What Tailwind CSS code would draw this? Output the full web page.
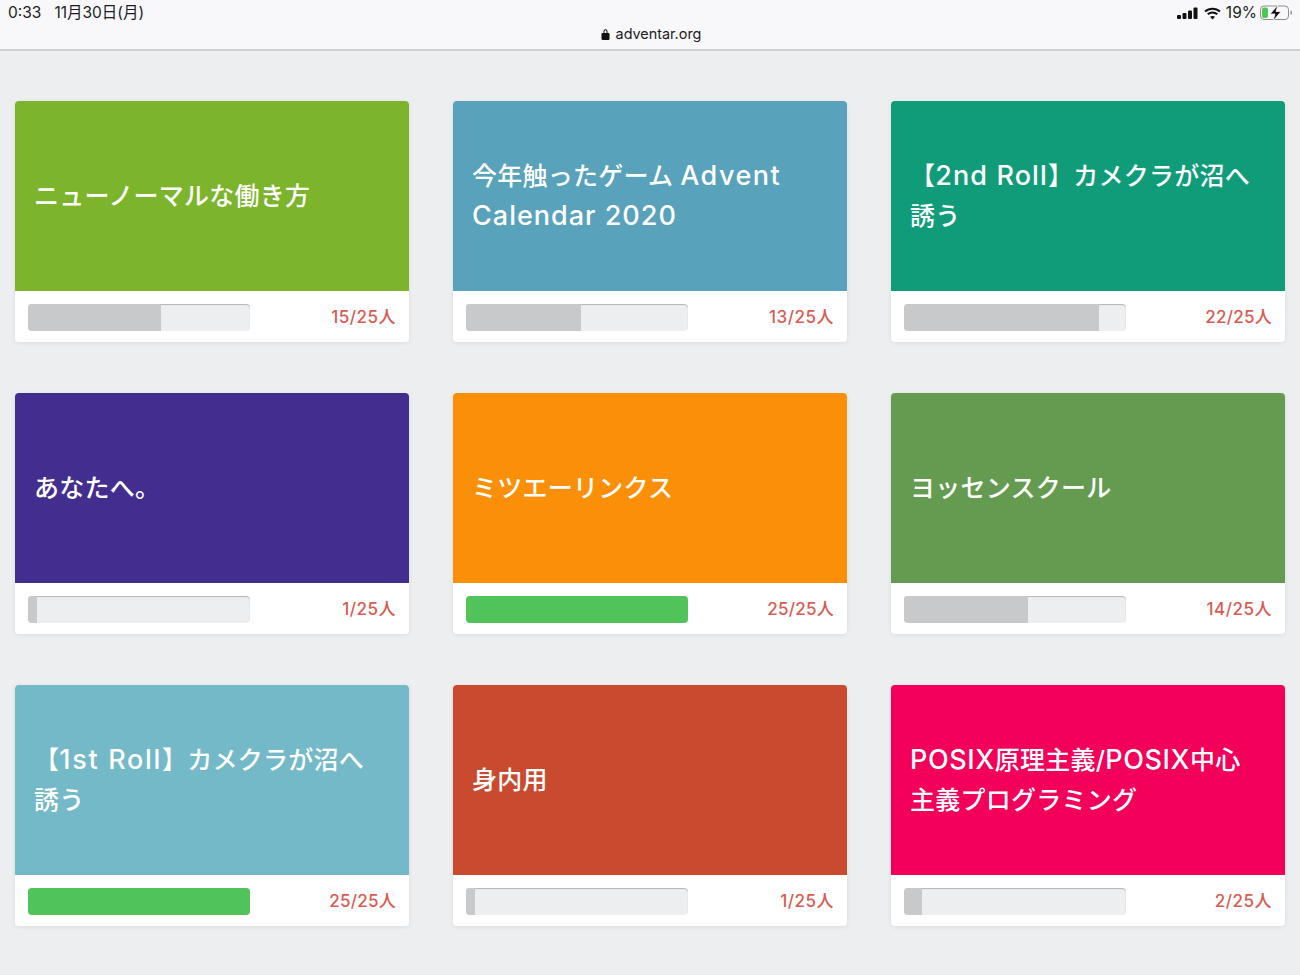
<!DOCTYPE html>
<html lang="ja">
<head>
  <meta charset="UTF-8" />
  <meta name="viewport" content="width=device-width, initial-scale=1.0" />
  <title>adventar.org</title>
  <script src="https://cdn.jsdelivr.net/npm/@tailwindcss/browser@4"></script>
</head>
<body class="bg-[#edeef0] font-['Inter','Noto_Sans_CJK_JP',sans-serif] h-[975px] overflow-hidden">
  <!-- Status bar + address -->
  <header class="relative h-[51px] bg-[#f8f8fa] border-b-2 border-[#cfcfd1] text-[#1c1c1e]">
    <div class="flex justify-between items-center h-[26px] pl-2 pr-[7px]">
      <div class="flex gap-[13px] text-[15.500px] leading-[26px]">
        <span>0:33</span>
        <span>11月30日(月)</span>
      </div>
      <div class="flex items-center text-[15.500px]">
        <svg width="21" height="13" viewBox="0 0 21 13" fill="#111"><rect x="0" y="8" width="4" height="4" rx="1"/><rect x="5.500" y="6" width="4" height="6" rx="1"/><rect x="11" y="3.500" width="4" height="8.500" rx="1"/><rect x="16.500" y="0.500" width="4" height="11.500" rx="1"/></svg>
        <svg class="ml-[6px]" width="17" height="13" viewBox="0 0 17 13" fill="none" stroke="#111" stroke-width="2"><path d="M1 4.600C5.200.8 11.800.8 16 4.600"/><path d="M3.700 7.300c2.700-2.400 6.900-2.400 9.600 0"/><path d="M8.500 12.500 6 9.800c1.400-1.200 3.600-1.200 5 0z" fill="#111" stroke="none"/></svg>
        <span class="ml-[5px]">19%</span>
        <svg class="ml-[3px]" width="33" height="16" viewBox="0 0 33 16" fill="none"><rect x=".5" y="1" width="28" height="13.500" rx="3.500" stroke="#8e8e90"/><rect x="2" y="2.500" width="6" height="10.500" rx="2" fill="#4cc654"/><path d="M30.500 5.500c1 .4 1.500 1.200 1.500 2.200s-.5 1.900-1.500 2.300z" fill="#8e8e90"/><path d="M18 0 10 9h5l-2 7 8-9.500h-5z" fill="#111" stroke="#f8f8fa" stroke-width=".8"/></svg>
      </div>
    </div>
    <div class="absolute left-0 right-0 top-[24px] flex justify-center items-center gap-[6px] pl-[2px] text-[14.400px] leading-[20px]">
      <svg width="9" height="12" viewBox="0 0 9 12" fill="#111"><path d="M2.500 5V3.300a2 2 0 0 1 4 0V5h-1V3.300a1 1 0 0 0-2 0V5z"/><rect x="0.500" y="5" width="8" height="7" rx="1.200"/></svg>
      <span>adventar.org</span>
    </div>
  </header>

  <!-- Calendars -->
  <main class="grid grid-cols-3 gap-x-[44px] gap-y-[51px] pt-[50px] px-[15px]">
    <article class="h-[241px] bg-white rounded-[4px] shadow-[0_1px_4px_rgba(0,0,0,0.08)] overflow-hidden">
      <div class="h-[190px] bg-[#7cb52b] flex items-center pl-[19px] pr-5 text-white text-[25px] font-medium leading-[40px] tracking-[0.25px]"><div>ニューノーマルな働き方</div></div>
      <div class="h-[51px] flex items-start justify-between pt-[13px] px-[13px]">
        <div class="w-[222px] h-[27px] bg-[#edeef0] rounded-[4px] overflow-hidden shadow-[inset_0_1px_1px_rgba(0,0,0,0.25)]"><div class="h-full bg-[#c8c9cb]" style="width:60%"></div></div>
        <span class="text-[17px] font-medium leading-[26px] text-[#d85c54] tracking-[0.5px]">15/25人</span>
      </div>
    </article>
    <article class="h-[241px] bg-white rounded-[4px] shadow-[0_1px_4px_rgba(0,0,0,0.08)] overflow-hidden">
      <div class="h-[190px] bg-[#58a2bc] flex items-center pl-[19px] pr-5 text-white text-[25px] font-medium leading-[40px] tracking-[0.25px]"><div>今年触ったゲーム <span class="text-[27px] leading-none tracking-[1.500px]">Advent</span> <span class="text-[27px] leading-none tracking-[1px]">Calendar 2020</span></div></div>
      <div class="h-[51px] flex items-start justify-between pt-[13px] px-[13px]">
        <div class="w-[222px] h-[27px] bg-[#edeef0] rounded-[4px] overflow-hidden shadow-[inset_0_1px_1px_rgba(0,0,0,0.25)]"><div class="h-full bg-[#c8c9cb]" style="width:52%"></div></div>
        <span class="text-[17px] font-medium leading-[26px] text-[#d85c54] tracking-[0.5px]">13/25人</span>
      </div>
    </article>
    <article class="h-[241px] bg-white rounded-[4px] shadow-[0_1px_4px_rgba(0,0,0,0.08)] overflow-hidden">
      <div class="h-[190px] bg-[#119c79] flex items-center pl-[19px] pr-5 text-white text-[25px] font-medium leading-[40px] tracking-[0.25px]"><div>【<span class="text-[27px] leading-none tracking-[1.100px]">2nd Roll</span>】カメクラが沼へ<br>誘う</div></div>
      <div class="h-[51px] flex items-start justify-between pt-[13px] px-[13px]">
        <div class="w-[222px] h-[27px] bg-[#edeef0] rounded-[4px] overflow-hidden shadow-[inset_0_1px_1px_rgba(0,0,0,0.25)]"><div class="h-full bg-[#c8c9cb]" style="width:88%"></div></div>
        <span class="text-[17px] font-medium leading-[26px] text-[#d85c54] tracking-[0.25px]">22/25人</span>
      </div>
    </article>
    <article class="h-[241px] bg-white rounded-[4px] shadow-[0_1px_4px_rgba(0,0,0,0.08)] overflow-hidden">
      <div class="h-[190px] bg-[#432e90] flex items-center pl-[19px] pr-5 text-white text-[25px] font-medium leading-[40px] tracking-[0.25px]"><div>あなたへ。</div></div>
      <div class="h-[51px] flex items-start justify-between pt-[13px] px-[13px]">
        <div class="w-[222px] h-[27px] bg-[#edeef0] rounded-[4px] overflow-hidden shadow-[inset_0_1px_1px_rgba(0,0,0,0.25)]"><div class="h-full bg-[#c8c9cb]" style="width:4%"></div></div>
        <span class="text-[17px] font-medium leading-[26px] text-[#d85c54] tracking-[0.5px]">1/25人</span>
      </div>
    </article>
    <article class="h-[241px] bg-white rounded-[4px] shadow-[0_1px_4px_rgba(0,0,0,0.08)] overflow-hidden">
      <div class="h-[190px] bg-[#fb9008] flex items-center pl-[19px] pr-5 text-white text-[25px] font-medium leading-[40px] tracking-[0.25px]"><div>ミツエーリンクス</div></div>
      <div class="h-[51px] flex items-start justify-between pt-[13px] px-[13px]">
        <div class="w-[222px] h-[27px] bg-[#edeef0] rounded-[4px] overflow-hidden"><div class="h-full bg-[#50c35a]" style="width:100%"></div></div>
        <span class="text-[17px] font-medium leading-[26px] text-[#d85c54] tracking-[0.25px]">25/25人</span>
      </div>
    </article>
    <article class="h-[241px] bg-white rounded-[4px] shadow-[0_1px_4px_rgba(0,0,0,0.08)] overflow-hidden">
      <div class="h-[190px] bg-[#649b50] flex items-center pl-[19px] pr-5 text-white text-[25px] font-medium leading-[40px] tracking-[0.25px]"><div>ヨッセンスクール</div></div>
      <div class="h-[51px] flex items-start justify-between pt-[13px] px-[13px]">
        <div class="w-[222px] h-[27px] bg-[#edeef0] rounded-[4px] overflow-hidden shadow-[inset_0_1px_1px_rgba(0,0,0,0.25)]"><div class="h-full bg-[#c8c9cb]" style="width:56%"></div></div>
        <span class="text-[17px] font-medium leading-[26px] text-[#d85c54] tracking-[0.5px]">14/25人</span>
      </div>
    </article>
    <article class="h-[241px] bg-white rounded-[4px] shadow-[0_1px_4px_rgba(0,0,0,0.08)] overflow-hidden">
      <div class="h-[190px] bg-[#74b9c7] flex items-center pl-[19px] pr-5 text-white text-[25px] font-medium leading-[40px] tracking-[0.25px]"><div>【<span class="text-[27px] leading-none tracking-[1.700px]">1st Roll</span>】カメクラが沼へ<br>誘う</div></div>
      <div class="h-[51px] flex items-start justify-between pt-[13px] px-[13px]">
        <div class="w-[222px] h-[27px] bg-[#edeef0] rounded-[4px] overflow-hidden"><div class="h-full bg-[#50c35a]" style="width:100%"></div></div>
        <span class="text-[17px] font-medium leading-[26px] text-[#d85c54] tracking-[0.25px]">25/25人</span>
      </div>
    </article>
    <article class="h-[241px] bg-white rounded-[4px] shadow-[0_1px_4px_rgba(0,0,0,0.08)] overflow-hidden">
      <div class="h-[190px] bg-[#c94a2f] flex items-center pl-[19px] pr-5 text-white text-[25px] font-medium leading-[40px] tracking-[0.25px]"><div>身内用</div></div>
      <div class="h-[51px] flex items-start justify-between pt-[13px] px-[13px]">
        <div class="w-[222px] h-[27px] bg-[#edeef0] rounded-[4px] overflow-hidden shadow-[inset_0_1px_1px_rgba(0,0,0,0.25)]"><div class="h-full bg-[#c8c9cb]" style="width:4%"></div></div>
        <span class="text-[17px] font-medium leading-[26px] text-[#d85c54] tracking-[0.5px]">1/25人</span>
      </div>
    </article>
    <article class="h-[241px] bg-white rounded-[4px] shadow-[0_1px_4px_rgba(0,0,0,0.08)] overflow-hidden">
      <div class="h-[190px] bg-[#f3005a] flex items-center pl-[19px] pr-5 text-white text-[25px] font-medium leading-[40px] tracking-[0.25px]"><div><span class="text-[27px] leading-none tracking-[0.600px]">POSIX</span>原理主義/<span class="text-[27px] leading-none tracking-[0.600px]">POSIX</span>中心<br>主義プログラミング</div></div>
      <div class="h-[51px] flex items-start justify-between pt-[13px] px-[13px]">
        <div class="w-[222px] h-[27px] bg-[#edeef0] rounded-[4px] overflow-hidden shadow-[inset_0_1px_1px_rgba(0,0,0,0.25)]"><div class="h-full bg-[#c8c9cb]" style="width:8%"></div></div>
        <span class="text-[17px] font-medium leading-[26px] text-[#d85c54] tracking-[0.5px]">2/25人</span>
      </div>
    </article>
  </main>
</body>
</html>
